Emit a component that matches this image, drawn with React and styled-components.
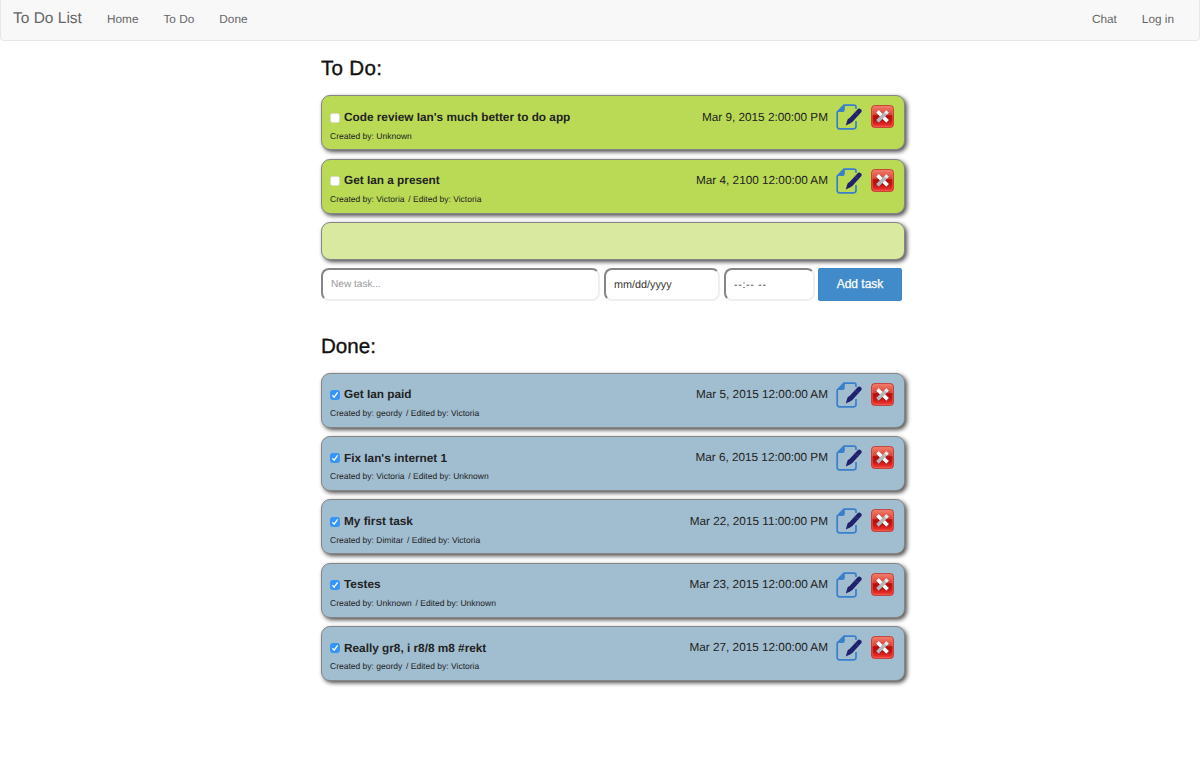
import React from 'react';
import styled, { createGlobalStyle } from 'styled-components';

const Global = createGlobalStyle`
  * { box-sizing: border-box; }
  body {
    margin: 0;
    background: #fff;
    color: #222;
    font-family: "Liberation Sans", Arial, sans-serif;
    font-size: 11.67px;
    line-height: 16.67px;
    text-rendering: geometricPrecision;
  }
`;

const Navbar = styled.nav`
  display: flex;
  align-items: center;
  height: 41px;
  padding: 0 25px 2px 12px;
  background: #f8f8f8;
  border: 1px solid #e7e7e7;
  border-top: 0;
  border-radius: 0 0 4px 4px;
  color: #666;
`;

const Brand = styled.span`
  width: 69px;
  font-size: 15.5px;
  margin-right: 25px;
  white-space: nowrap;
`;

const NavLinks = styled.div`
  display: flex;
  gap: 25px;
  font-size: 11.8px;
  margin-left: ${(p) => (p.$end ? 'auto' : '0')};
`;

const Main = styled.main`
  width: 584px;
  margin: 0 0 0 321px;
  padding-bottom: 40px;
`;

const Heading = styled.h3`
  margin: ${(p) => p.$top}px 0 0;
  height: 22px;
  font-size: 20.6px;
  line-height: 22px;
  font-weight: 400;
  letter-spacing: ${(p) => p.$ls || 0}px;
  color: #111;
  -webkit-text-stroke: 0.35px #111;
`;

const List = styled.div`
  display: flex;
  flex-direction: column;
  gap: 8.33px;
  margin-top: ${(p) => p.$top}px;
`;

const Card = styled.article`
  display: flex;
  justify-content: space-between;
  height: ${(p) => (p.$empty ? 37.5 : 55)}px;
  padding: 8px 10px 0 8px;
  border: 1px solid #858585;
  border-radius: 9px;
  box-shadow: 2px 2px 4px rgba(0, 0, 0, 0.7);
  background: ${(p) => p.$color};
`;

const Info = styled.div`
  padding-top: 4.5px;
`;

const TitleRow = styled.div`
  display: flex;
  align-items: center;
  gap: 4px;
  height: 17px;
`;

const Title = styled.strong`
  font-size: 11.8px;
  white-space: nowrap;
`;

const Check = styled.span`
  display: flex;
  width: 10px;
  height: 10px;
  margin-top: 1px;
  border: 1px solid ${(p) => (p.$on ? '#3794f7' : '#d9dccf')};
  border-radius: 2.5px;
  background: ${(p) => (p.$on ? '#3794f7' : '#fff')};
`;

const Meta = styled.div`
  display: flex;
  gap: 3.8px;
  margin-top: 4px;
  font-size: 8.5px;
  line-height: 12px;
  white-space: nowrap;
`;

const Actions = styled.div`
  display: flex;
  align-items: flex-start;
`;

const DateText = styled.time`
  margin: 4.5px 8px 0 0;
  font-size: 11.75px;
  line-height: 17px;
  white-space: nowrap;
`;

const EditSvg = styled.svg`
  width: 26px;
  height: 26px;
  margin-right: 9px;
`;

const DeleteSvg = styled.svg`
  width: 23px;
  height: 23px;
  margin-top: 1px;
`;

const Form = styled.form`
  display: flex;
  gap: 4px;
  margin-top: 8px;
`;

const Field = styled.div`
  width: ${(p) => p.$w}px;
  height: 33px;
  padding-left: 8px;
  border: 2px solid;
  border-color: #868686 #efefef #efefef #868686;
  border-radius: 8px;
  font-size: ${(p) => p.$size || 10.1}px;
  line-height: 30px;
  color: ${(p) => (p.$muted ? '#999' : '#333')};
  letter-spacing: ${(p) => p.$ls || 0}px;
`;

const AddButton = styled.button`
  width: 84px;
  height: 33px;
  margin-left: -1px;
  padding: 0;
  border: 1px solid #3b86c6;
  border-radius: 2px;
  background: #428bca;
  color: #fff;
  font: 12px "Liberation Sans", Arial, sans-serif;
  -webkit-text-stroke: 0.25px #fff;
`;

const EditIcon = () => (
  <EditSvg viewBox="0 0 26 26" fill="none">
    <path d="M20 5V3.2A2 2 0 0 0 18 1.2H8L1.2 8V22.5A2.2 2.2 0 0 0 3.4 24.8H17.8A2.2 2.2 0 0 0 20 22.6V17" stroke="#3a7fcb" strokeWidth="1.7" />
    <path d="M8.8 1V5.8A2.2 2.2 0 0 1 6.6 8H1Z" fill="#3a7fcb" />
    <path d="M23.2 7L15.3 15.6" stroke="#20216c" strokeWidth="4.8" strokeLinecap="round" />
    <path d="M12.2 14.2L16.6 17.7L14.4 19.2L9.8 21.4L11.2 16.6Z" fill="#20216c" />
    <path d="M18.3 7.8L22.6 11.3" stroke="#4a5494" strokeWidth=".5" />
  </EditSvg>
);

const DeleteIcon = () => (
  <DeleteSvg viewBox="0 0 23 23">
    <defs>
      <linearGradient id="red" x1="0" y1="0" x2="0" y2="1">
        <stop offset="0" stopColor="#f0806c" />
        <stop offset=".43" stopColor="#dc3f36" />
        <stop offset=".46" stopColor="#b90b0c" />
        <stop offset=".7" stopColor="#c91212" />
        <stop offset="1" stopColor="#f6403a" />
      </linearGradient>
    </defs>
    <rect x=".7" y=".7" width="21.6" height="21.6" rx="2.6" fill="url(#red)" stroke="#c3302b" />
    <rect x="1.6" y="1.6" width="19.8" height="19.8" rx="2" fill="none" stroke="#ff8b78" strokeOpacity=".55" strokeWidth=".7" />
    <path d="M6.2 6.6L16.8 17M16.8 6.6L6.2 17" stroke="#7d1515" strokeWidth="4.4" opacity=".55" />
    <path d="M6.4 6.4L16.6 16.4" stroke="#fff" strokeWidth="3.6" />
    <path d="M16.6 6.4L6.4 16.4" stroke="#b4b6b7" strokeWidth="3.6" />
    <path d="M16.6 6.4L14.6 8.4" stroke="#e8e8e8" strokeWidth="3.6" />
  </DeleteSvg>
);

const Task = ({ title, by, edited, date, done }) => (
  <Card $color={done ? '#a1bdd0' : '#bada55'}>
    <Info>
      <TitleRow>
        <Check $on={done}>
          {done && (
            <svg width="8" height="8" viewBox="0 0 8 8" fill="none">
              <path d="M1.4 4.3L3.2 6.2L6.6 1.4" stroke="#fff" strokeWidth="1.3" />
            </svg>
          )}
        </Check>
        <Title>{title}</Title>
      </TitleRow>
      <Meta>
        <span>Created by: {by}</span>
        {edited && <span>/ Edited by: {edited}</span>}
      </Meta>
    </Info>
    <Actions>
      <DateText>{date}</DateText>
      <EditIcon />
      <DeleteIcon />
    </Actions>
  </Card>
);

const todo = [
  { title: "Code review Ian's much better to do app", by: 'Unknown', date: 'Mar 9, 2015 2:00:00 PM' },
  { title: 'Get Ian a present', by: 'Victoria', edited: 'Victoria', date: 'Mar 4, 2100 12:00:00 AM' },
];

const done = [
  { title: 'Get Ian paid', by: 'geordy', edited: 'Victoria', date: 'Mar 5, 2015 12:00:00 AM' },
  { title: "Fix Ian's internet 1", by: 'Victoria', edited: 'Unknown', date: 'Mar 6, 2015 12:00:00 PM' },
  { title: 'My first task', by: 'Dimitar', edited: 'Victoria', date: 'Mar 22, 2015 11:00:00 PM' },
  { title: 'Testes', by: 'Unknown', edited: 'Unknown', date: 'Mar 23, 2015 12:00:00 AM' },
  { title: 'Really gr8, i r8/8 m8 #rekt', by: 'geordy', edited: 'Victoria', date: 'Mar 27, 2015 12:00:00 AM' },
];

export default function App() {
  return (
    <>
      <Global />
      <Navbar>
        <Brand>To Do List</Brand>
        <NavLinks>
          <span>Home</span>
          <span>To Do</span>
          <span>Done</span>
        </NavLinks>
        <NavLinks $end>
          <span>Chat</span>
          <span>Log in</span>
        </NavLinks>
      </Navbar>
      <Main>
        <Heading $top={17.4} $ls={0.3}>To Do:</Heading>
        <List $top={15}>
          {todo.map((t) => <Task key={t.title} {...t} />)}
          <Card $empty $color="#d9e9a0" />
        </List>
        <Form>
          <Field $w={279} $muted>New task...</Field>
          <Field $w={116} $size={10.8}>mm/dd/yyyy</Field>
          <Field $w={91} $size={10.6} $ls={0.7}>--:-- --</Field>
          <AddButton type="button">Add task</AddButton>
        </Form>
        <Heading $top={35.5}>Done:</Heading>
        <List $top={14.6}>
          {done.map((t) => <Task key={t.title} {...t} done />)}
        </List>
      </Main>
    </>
  );
}
